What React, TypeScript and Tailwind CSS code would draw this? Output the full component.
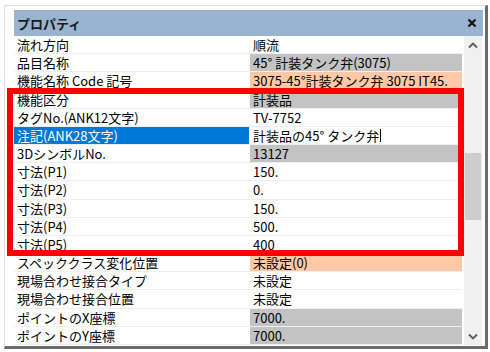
import React from 'react'

type Row = { name: string; value: string; tone: 'white' | 'gray' | 'salmon'; selected?: boolean; editing?: boolean }

const rows: Row[] = [
  { name: '流れ方向', value: '順流', tone: 'white' },
  { name: '品目名称', value: '45° 計装タンク弁(3075)', tone: 'gray' },
  { name: '機能名称 Code 記号', value: '3075-45°計装タンク弁 3075 IT45.', tone: 'salmon' },
  { name: '機能区分', value: '計装品', tone: 'gray' },
  { name: 'タグNo.(ANK12文字)', value: 'TV-7752', tone: 'white' },
  { name: '注記(ANK28文字)', value: '計装品の45° タンク弁', tone: 'white', selected: true, editing: true },
  { name: '3DシンボルNo.', value: '13127', tone: 'gray' },
  { name: '寸法(P1)', value: '150.', tone: 'white' },
  { name: '寸法(P2)', value: '0.', tone: 'white' },
  { name: '寸法(P3)', value: '150.', tone: 'white' },
  { name: '寸法(P4)', value: '500.', tone: 'white' },
  { name: '寸法(P5)', value: '400', tone: 'white' },
  { name: 'スペッククラス変化位置', value: '未設定(0)', tone: 'salmon' },
  { name: '現場合わせ接合タイプ', value: '未設定', tone: 'white' },
  { name: '現場合わせ接合位置', value: '未設定', tone: 'white' },
  { name: 'ポイントのX座標', value: '7000.', tone: 'gray' },
  { name: 'ポイントのY座標', value: '7000.', tone: 'gray' },
]

const toneClass = {
  white: 'bg-white',
  gray: 'bg-[#c3c3c3]',
  salmon: 'bg-[#ffc8a6]',
}

function Chevron({ down }: { down?: boolean }) {
  return (
    <svg width="10" height="7" viewBox="0 0 10 7">
      <polyline
        points={down ? '1,1.5 5,5.5 9,1.5' : '1,5.5 5,1.5 9,5.5'}
        fill="none"
        stroke="#5a5a5a"
        strokeWidth="1.8"
      />
    </svg>
  )
}

export default function App() {
  return (
    <div className="relative w-[490px] h-[352px] overflow-hidden bg-white font-['Noto_Sans_CJK_JP',sans-serif] text-[13px] text-black">
      <div className="ml-[4px] mt-[5px] w-[484px] h-[344px] border-t border-l border-[#dcdcdc] border-r-[3px] border-r-[#6b6b6b] border-b-[3px] border-b-[#6b6b6b] pl-[9px] pt-[4px] pr-[2px]">
        {/* title bar */}
        <div className="flex items-center justify-between h-[26px] bg-[#99b4d1] pl-[3px] pr-[6px]">
          <span className="font-bold text-[13px] leading-none text-[#1a1a1a]">プロパティ</span>
          <svg width="10" height="10" viewBox="0 0 10 10">
            <path d="M1.5 1.5 L8.5 8.5 M8.5 1.5 L1.5 8.5" stroke="#111" strokeWidth="2.2" />
          </svg>
        </div>

        <div className="flex h-[309px]">
          <div className="w-[448px] flex flex-col">
            {rows.map((r) => (
              <div key={r.name} className="flex h-[18.18px] border-b border-[#efefef]">
                <div
                  className={
                    'w-[235px] flex items-center pl-[3px] leading-none whitespace-nowrap ' +
                    (r.selected ? 'bg-[#0078d7] text-white' : 'bg-white')
                  }
                >
                  {r.name}
                </div>
                <div className="w-[1px] bg-white" />
                <div
                  className={
                    'flex-1 flex items-center pl-[3px] leading-none whitespace-nowrap overflow-hidden ' +
                    toneClass[r.tone]
                  }
                >
                  {r.value}
                  {r.editing && <span className="ml-[1px] w-[1px] h-[13px] bg-black" />}
                </div>
              </div>
            ))}
          </div>

          {/* scrollbar */}
          <div className="ml-[2px] w-[18px] bg-[#f0f0f0] flex flex-col items-center">
            <div className="h-[18px] flex items-center justify-center">
              <Chevron />
            </div>
            <div className="h-[99px]" />
            <div className="w-[16px] h-[67px] bg-[#cdcdcd]" />
            <div className="flex-1" />
            <div className="h-[18px] flex items-center justify-center">
              <Chevron down />
            </div>
          </div>
        </div>
      </div>

      {/* red highlight frame */}
      <div className="absolute left-[7px] top-[88px] w-[457px] h-[168px] border-[6px] border-[#ff0000] pointer-events-none" />
    </div>
  )
}
